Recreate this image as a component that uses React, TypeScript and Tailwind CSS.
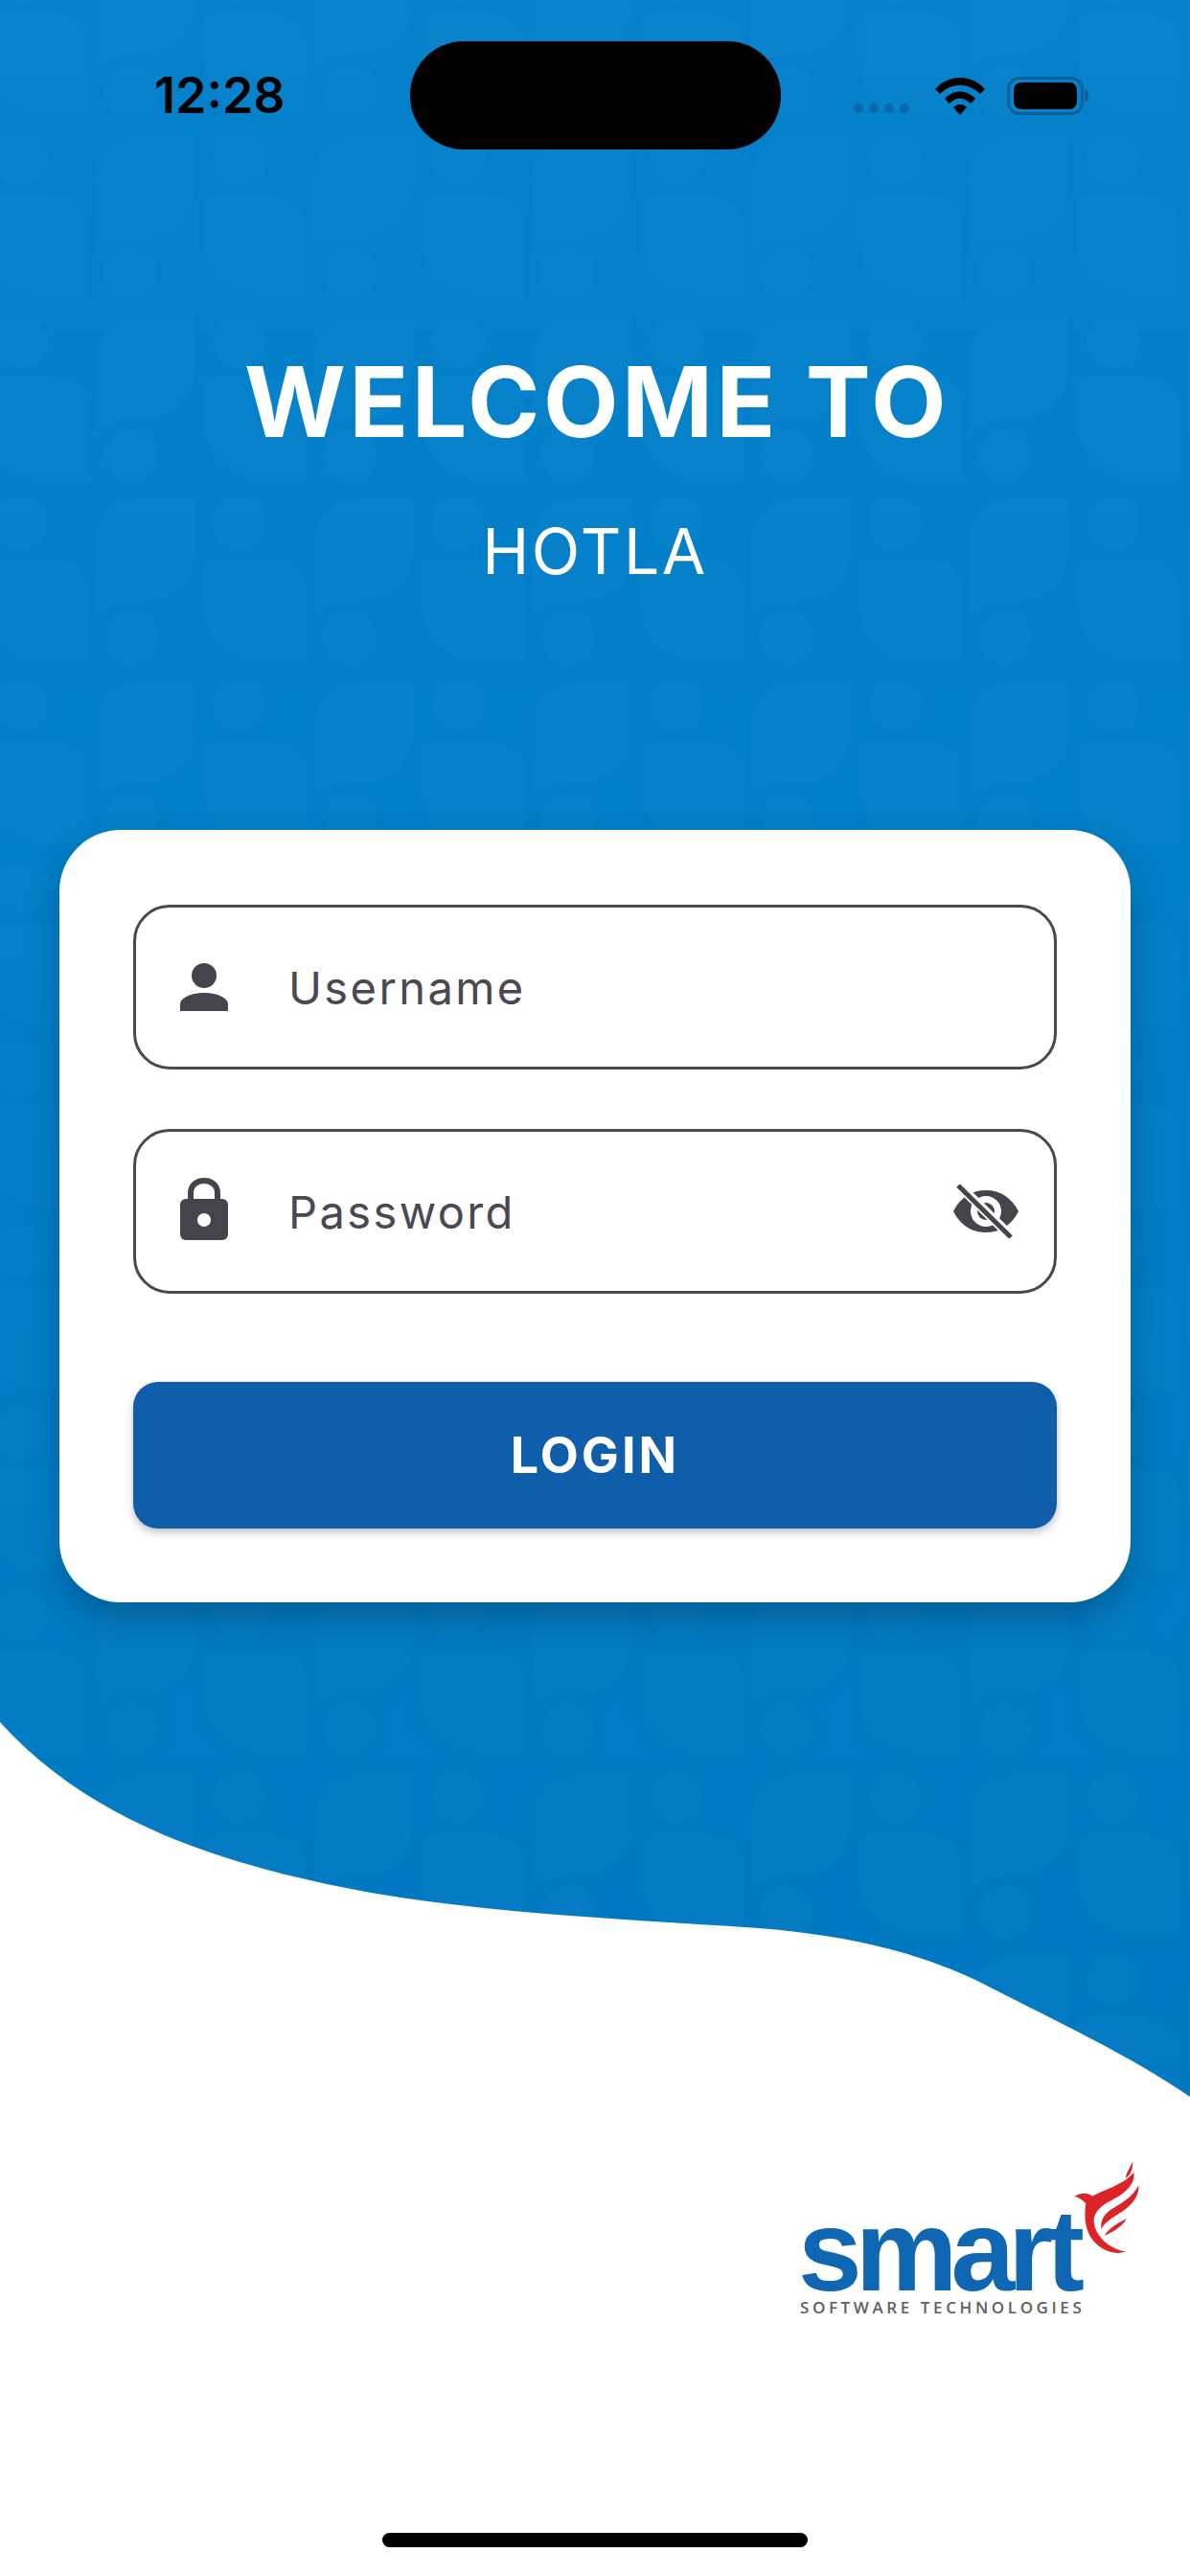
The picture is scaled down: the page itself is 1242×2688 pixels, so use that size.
// blue area with the wave along its bottom edge
const WAVE =
  "M0 0H1242V2188C1180 2145 1100 2108 1030 2072C960 2036 880 2019 792 2012C650 2002 480 1996 341 1966C220 1940 90 1897 0 1797Z";

function Background() {
  return (
    <svg className="absolute left-0 top-0" width="1242" height="2688" viewBox="0 0 1242 2688">
      <defs>
        <linearGradient id="blue" x1="0" y1="0" x2="0" y2="1">
          <stop offset="0" stopColor="#0581cb" />
          <stop offset="0.45" stopColor="#007ec7" />
          <stop offset="1" stopColor="#0078c1" />
        </linearGradient>
        <pattern id="tile" x="-15" y="140" width="228" height="190" patternUnits="userSpaceOnUse">
          <path
            fill="#fff"
            fillOpacity="0.016"
            d="M0 70C8 60 25 63 60 63C85 63 107 72 107 95V170H70C30 170 0 150 0 110Z
               M9 25a28 28 0 1 0 56 0a28 28 0 1 0 -56 0Z
               M115 50C115 20 135 0 165 0H218V55C218 85 195 107 165 107C140 107 120 112 115 125Z
               M124 145a28 28 0 1 0 56 0a28 28 0 1 0 -56 0Z"
          />
        </pattern>
      </defs>
      <path d={WAVE} fill="url(#blue)" />
      <path d={WAVE} fill="url(#tile)" />
    </svg>
  );
}

function Field({ label, icon, trailing }: { label: string; icon: React.ReactNode; trailing?: React.ReactNode }) {
  return (
    <div className="flex h-[172px] items-center rounded-[38px] border-[3px] border-[#4a4850] bg-white pl-[46px] pr-[36px]">
      <div className="w-[50px] shrink-0">{icon}</div>
      <span className="ml-[63px] text-[47px] leading-none tracking-[2.4px] text-[#4a4852]">{label}</span>
      {trailing && <div className="ml-auto">{trailing}</div>}
    </div>
  );
}

function PersonIcon() {
  return (
    <svg width="50" height="50" viewBox="0 0 50 50" className="block" fill="#45434c">
      <circle cx="25" cy="13" r="13" />
      <path d="M0 50V43C0 36 12 31 25 31S50 36 50 43V50Z" />
    </svg>
  );
}

function LockIcon() {
  return (
    <svg width="50" height="66" viewBox="0 0 50 66" className="mb-[4px] block">
      <path d="M11 24V16C11 8 17 3 25 3S39 8 39 16V24" fill="none" stroke="#45434c" strokeWidth="6" />
      <rect x="0" y="22" width="50" height="43" rx="6" fill="#45434c" />
      <circle cx="25" cy="44" r="7" fill="#fff" />
    </svg>
  );
}

function EyeOffIcon() {
  return (
    <svg width="70" height="56" viewBox="0 0 70 56" className="block">
      <path d="M1 28C8 14 20 6 35 6S62 14 69 28C62 42 50 50 35 50S8 42 1 28Z" fill="#45434c" />
      <circle cx="35" cy="28" r="16" fill="#fff" />
      <circle cx="35" cy="28" r="9" fill="#45434c" />
      <path d="M6 0L62 55" stroke="#fff" strokeWidth="10" />
      <path d="M6 1L61 55" stroke="#45434c" strokeWidth="5" />
    </svg>
  );
}

function Bird() {
  return (
    <svg width="100" height="120" viewBox="0 0 300 360" className="absolute left-[267px] top-[-63px]" fill="#dc2428">
      <path d="M65 152C82 144 104 138 120 152C160 130 215 118 250 78C256 115 220 145 180 165C150 180 125 200 125 230C127 270 165 315 225 325C190 340 140 320 115 280C95 245 95 205 100 175C92 165 80 158 65 152Z" />
      <path d="M265 118C268 165 225 195 190 215C170 228 155 240 148 255C145 225 160 205 185 190C215 172 250 150 265 118Z" />
      <path d="M228 222C215 245 190 262 158 275C170 255 200 235 228 222Z" />
      <path d="M245 45C250 65 240 85 225 95C225 80 238 65 245 45Z" />
    </svg>
  );
}

function Logo() {
  return (
    <div className="relative w-[294px]">
      <div className="h-[88px] font-['Liberation_Sans',sans-serif] text-[120px] font-bold leading-[88px] tracking-[-7px] text-[#0f66b3]">
        smart
      </div>
      <div className="ml-[2px] mt-[7px] whitespace-nowrap font-['Open_Sans',sans-serif] text-[17px] font-semibold leading-[18px] tracking-[3.6px] text-[#5f5f63]">
        SOFTWARE TECHNOLOGIES
      </div>
      <Bird />
    </div>
  );
}

export default function App() {
  return (
    <div className="relative flex h-[2688px] w-[1242px] flex-col overflow-hidden bg-white font-['Inter',sans-serif]">
      <Background />

      <div className="relative flex h-[199px] items-center pl-[161px]">
        <span className="w-[267px] text-[52px] font-semibold leading-none text-black">12:28</span>
        <div className="h-[113px] w-[387px] rounded-[56px] bg-black" />
        <div className="ml-[76px] mt-[27px] flex gap-[6px]">
          <span className="h-[10px] w-[10px] rounded-full bg-[#0a69a8]" />
          <span className="h-[10px] w-[10px] rounded-full bg-[#0a69a8]" />
          <span className="h-[10px] w-[10px] rounded-full bg-[#0a69a8]" />
          <span className="h-[10px] w-[10px] rounded-full bg-[#0a69a8]" />
        </div>
        <svg width="52" height="40" viewBox="0 0 52 40" className="ml-[27px]">
          <path d="M0 13C14 -3 38 -3 52 13L47 18C35 6 17 6 5 18Z" />
          <path d="M10 23C19 13 33 13 42 23L37 28C30 21 22 21 15 28Z" />
          <path d="M19 32C23 28 29 28 33 32L26 40Z" />
        </svg>
        <div className="ml-[23px] flex items-center">
          <div className="flex h-[40px] w-[80px] items-center justify-center rounded-[13px] border-[3px] border-[#0a5f9c]">
            <div className="h-[28px] w-[66px] rounded-[8px] bg-black" />
          </div>
          <div className="ml-[1px] h-[12px] w-[4px] rounded-r-full bg-[#0a5f9c]" />
        </div>
      </div>

      <h1 className="relative mt-[165px] pl-[4px] text-center text-[102px] font-bold leading-[110px] tracking-[3.5px] text-white">
        WELCOME TO
      </h1>
      <p className="relative mt-[65px] text-center text-[66px] font-normal leading-[72px] tracking-[2.5px] text-white">
        HOTLA
      </p>

      <div className="relative mx-[62px] mt-[255px] flex h-[806px] flex-col rounded-[64px] bg-white px-[77px] pt-[78px] shadow-[0_18px_36px_rgba(0,0,0,0.22)]">
        <Field label="Username" icon={<PersonIcon />} />
        <div className="mt-[62px]">
          <Field label="Password" icon={<LockIcon />} trailing={<EyeOffIcon />} />
        </div>
        <button className="mt-[92px] flex h-[153px] items-center justify-center rounded-[26px] bg-[#0e5ea9] text-[52px] font-bold tracking-[3px] text-white shadow-[0_4px_8px_rgba(0,0,0,0.25)]">
          LOGIN
        </button>
      </div>

      <div className="relative mt-[632px] flex justify-end pr-[115px]">
        <Logo />
      </div>

      <div className="relative mt-auto mb-[30px] h-[15px] w-[444px] self-center rounded-full bg-black" />
    </div>
  );
}
